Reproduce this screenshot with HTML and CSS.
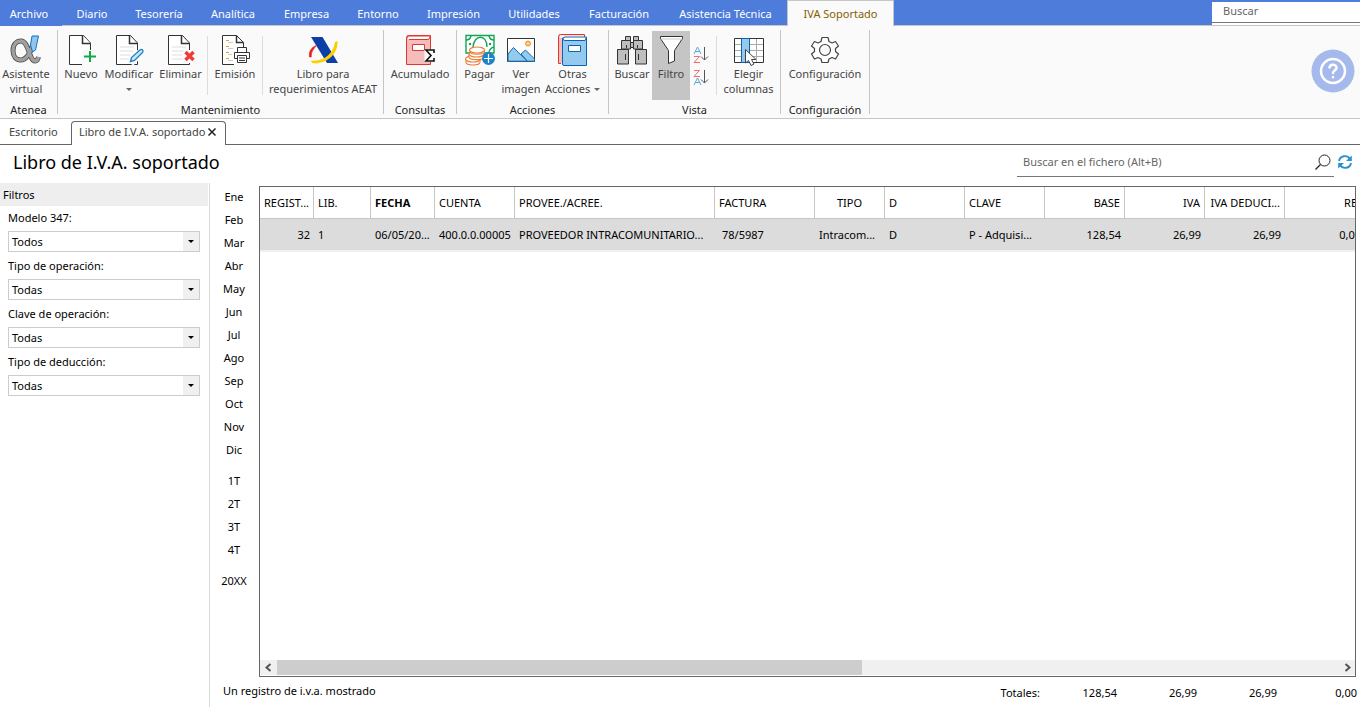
FILE: index.html
```html
<!DOCTYPE html>
<html lang="es">
<head>
<meta charset="utf-8">
<title>Libro de I.V.A. soportado</title>
<link rel="stylesheet" href="styles.css">
</head>
<body>
<div class="app">
  <header class="menubar">
    <nav class="menu">
      <button class="menu-item menu-file">Archivo</button>
      <button class="menu-item">Diario</button>
      <button class="menu-item">Tesorería</button>
      <button class="menu-item">Analítica</button>
      <button class="menu-item">Empresa</button>
      <button class="menu-item">Entorno</button>
      <button class="menu-item">Impresión</button>
      <button class="menu-item">Utilidades</button>
      <button class="menu-item">Facturación</button>
      <button class="menu-item">Asistencia Técnica</button>
      <button class="menu-item menu-active">IVA Soportado</button>
    </nav>
    <div class="top-search"><input type="text" placeholder="Buscar" aria-label="Buscar"></div>
  </header>

  <section class="ribbon">
    <div class="group g-atenea">
      <div class="tools">
        <button class="tool">
          <svg width="32" height="32" viewBox="0 0 32 32"><path d="M24 7C21 18 17 26 10.500 26C6 26 3 22.500 3 16.500C3 10.500 6.500 7 11 7C19 7 19 27 25 27Q27.500 27 28.500 23" fill="none" stroke="#4a4a4a" stroke-width="5"/><path d="M24 7C21 18 17 26 10.500 26C6 26 3 22.500 3 16.500C3 10.500 6.500 7 11 7C19 7 19 27 25 27Q27.500 27 28.500 23" fill="none" stroke="#a0a0a0" stroke-width="3.400"/><path d="M22 2H28.500L25.500 16L22.500 18L20.500 11Z" fill="#8dc8f2" stroke="#1a70b8"/></svg>
          <span>Asistente<br>virtual</span>
        </button>
      </div>
      <h2>Atenea</h2>
    </div>

    <div class="group g-mant">
      <div class="tools">
        <button class="tool">
          <svg width="32" height="32" viewBox="0 0 32 32"><path d="M4.500 1.500H18.500L25.500 9V30.500H4.500Z" fill="#fff" stroke="#333"/><path d="M17.500 1.500V9.500H25.500" fill="#fff" stroke="#333" stroke-width="1.500"/><path d="M17 16H32V32H17Z" fill="#fafafa"/><path d="M25 17V28M19 22.500H31" stroke="#12a84a" stroke-width="2"/></svg>
          <span>Nuevo</span>
        </button>
        <button class="tool">
          <svg width="32" height="32" viewBox="0 0 32 32"><path d="M3.500 1.500H17.500L24.500 9V30.500H3.500Z" fill="#fff" stroke="#333"/><path d="M16.500 1.500V9.500H24.500" fill="none" stroke="#333" stroke-width="1.500"/><path d="M7 13H21M7 17H20M7 21H17M7 25H16" stroke="#ddd"/><path d="M17 27L28 15.500L31 18L20 29Z" fill="#fafafa" stroke="#fafafa" stroke-width="4"/><path d="M17.500 27.500L18.500 23.500L27 16C29 14.500 31 16.500 29.500 18.500L21.500 26.500Z" fill="#cde6f7" stroke="#1b80c4" stroke-width="1.300"/></svg>
          <span>Modificar<br><i class="caret"></i></span>
        </button>
        <button class="tool">
          <svg width="32" height="32" viewBox="0 0 32 32"><path d="M3.500 1.500H17.500L24.500 9V30.500H3.500Z" fill="#fff" stroke="#333"/><path d="M16.500 1.500V9.500H24.500" fill="none" stroke="#333" stroke-width="1.500"/><path d="M7 13H21M7 17H18M7 21H17M7 25H18" stroke="#ddd"/><path d="M18 16H32V29H18Z" fill="#fafafa"/><path d="M20.500 18L28.500 26M28.500 18L20.500 26" stroke="#ef3b37" stroke-width="3.400"/></svg>
          <span>Eliminar</span>
        </button>
        <div class="divider"></div>
        <button class="tool">
          <svg width="32" height="32" viewBox="0 0 32 32"><path d="M15 30.500H3.500V1.500H17.500L24.500 8.500V14" fill="#fff" stroke="#333"/><path d="M17.500 1.500V8.500H24.500" fill="none" stroke="#333" stroke-width="1.500"/><path d="M7 6.500H10M7 12.500H10M7 18.500H10M7 24.500H10" stroke="#f09a1a"/><path d="M9 8.500H14M9 14.500H14M9 20.500H13M9 26.500H14" stroke="#ccc"/><path d="M18.500 18V13.500H27.500V18M18.500 24.500H15.500V18.500H30.500V24.500H27.500" fill="#fff" stroke="#333"/><path d="M18.500 21.500H27.500V28.500H18.500ZM20 24H26M20 26.500H26" fill="#fff" stroke="#333"/></svg>
          <span>Emisión</span>
        </button>
        <div class="divider"></div>
        <button class="tool">
          <svg width="32" height="32" viewBox="0 0 32 32"><path d="M2.500 23C1.500 17 5 13 9.500 11.500C6.500 15 4 17.500 4.200 23Z" fill="#e3221c" stroke="#e3221c" stroke-width=".7"/><path d="M4 3H15.500L31 29H20Z" fill="#0b3ea6"/><path d="M4 26.500C16 28 26.500 20 28 8L30.500 7C31.500 21 18 31 5 29Z" fill="#fbd000"/></svg>
          <span>Libro para<br>requerimientos AEAT</span>
        </button>
      </div>
      <h2>Mantenimiento</h2>
    </div>

    <div class="group g-cons">
      <div class="tools">
        <button class="tool">
          <svg width="32" height="32" viewBox="0 0 32 32"><path d="M2.500 3.500Q2.500 1.500 4.500 1.500H26.500V30.500H2.500Z" fill="#f5bcbc" stroke="#e3342f"/><path d="M3 4.500Q3 2 5 2H26.500L24.500 5.500H5" fill="#fff" stroke="#e3342f"/><path d="M8.500 10.500H20.500V16.500H8.500Z" fill="#fff" stroke="#e3342f"/><path d="M20.500 15.500H31V28H20.500Z" fill="#fafafa"/><path d="M30 19V16H22L27 21.500L22 27H30V24" fill="none" stroke="#111" stroke-width="1.600"/></svg>
          <span>Acumulado</span>
        </button>
      </div>
      <h2>Consultas</h2>
    </div>

    <div class="group g-acc">
      <div class="tools">
        <button class="tool">
          <svg width="32" height="32" viewBox="0 0 32 32"><path d="M2 1.500H30V19H2Z" fill="#fff" stroke="#12a452" stroke-width="1.400"/><path d="M2 6Q6 6 7 2M25 2Q26 6 30 6M30 13Q26 14 25 18M9 13C10 0 23 0 23 13" fill="none" stroke="#12a452" stroke-width="1.400"/><circle cx="6" cy="10" r="1.200" fill="#12a452"/><circle cx="26" cy="10" r="1.200" fill="#12a452"/><g fill="#fff" stroke="#ee7b32" stroke-width="1.100"><path d="M2 25V28C2 32 16 32 16 28V25"/><ellipse cx="9" cy="25" rx="7.500" ry="3"/><path d="M5 20V23C5 26.500 20 26.500 20 23V20"/><ellipse cx="12.500" cy="20" rx="7.500" ry="3"/><path d="M6 16V18C6 21 20.500 21 20.500 18V16"/><ellipse cx="13" cy="16" rx="7.500" ry="3"/></g><circle cx="24.500" cy="24.500" r="6.500" fill="#1b83c8"/><path d="M24.500 20V29M20 24.500H29" stroke="#fff" stroke-width="1.200"/></svg>
          <span>Pagar</span>
        </button>
        <button class="tool">
          <svg width="32" height="32" viewBox="0 0 32 32"><path d="M2.500 4.500H29.500V27.500H2.500Z" fill="#fff" stroke="#333"/><circle cx="23" cy="9.500" r="2.500" fill="#fbcf8a" stroke="#ef8b23"/><path d="M3 20L8.500 13.500L22 27.200H3Z" fill="#93cbef" stroke="#1769aa"/><path d="M16 20L20.500 16L29.500 25V27.200H22.500Z" fill="#93cbef" stroke="#1769aa"/></svg>
          <span>Ver<br>imagen</span>
        </button>
        <button class="tool">
          <svg width="32" height="32" viewBox="0 0 32 32"><path d="M4 29.500H1.500V2.500Q1.500 .5 3.500 .5H27.500V4" fill="#f5bcbc" stroke="#e3342f"/><path d="M3 2.500H27" stroke="#fff" stroke-width="2"/><path d="M5.500 5Q5.500 3.500 7 3.500H29.500V31.500H7Q5.500 31.500 5.500 30Z" fill="#93cbef" stroke="#0e62ae"/><path d="M6 5Q6 3 8 3H29.500L28 6.500H8Q6 6.500 6 5Z" fill="#fff" stroke="#0e62ae"/><path d="M11.500 11.500H23.500V17.500H11.500Z" fill="#fff" stroke="#0e62ae"/></svg>
          <span>Otras<br>Acciones <i class="caret"></i></span>
        </button>
      </div>
      <h2>Acciones</h2>
    </div>

    <div class="group g-vista">
      <div class="tools">
        <button class="tool">
          <svg width="32" height="32" viewBox="0 0 32 32"><g fill="#bebebe" stroke="#333"><path d="M9.500 2.500H14.500V7H9.500ZM17.500 2.500H22.500V7H17.500Z"/><path d="M5.500 15V6.500H14.500V15ZM17.500 15V6.500H26.500V15Z"/><path d="M1.500 30V15.500H12.500V30ZM19.500 30V15.500H30.500V30Z"/><path d="M14.500 8.500H17.500V13.500H14.500Z"/></g><path d="M9.500 20V26M22.500 20V26M10.500 11V14M21.500 11V14" stroke="#333"/></svg>
          <span>Buscar</span>
        </button>
        <button class="tool tool-on" aria-pressed="true">
          <svg width="32" height="32" viewBox="0 0 32 32"><path d="M5.500 2.500H27.500V4.500L19.500 16.500V27L13.500 29.500V16.500L5.500 4.500Z" fill="#fff" stroke="#333"/><path d="M6 5H27" stroke="#ccc"/></svg>
          <span>Filtro</span>
        </button>
        <div class="sorts">
          <button aria-label="Orden ascendente"><svg width="18" height="20" viewBox="0 0 18 20"><path d="M2 8L5.500 1L9 8M3 5.500H8" fill="none" stroke="#57a9dc"/><path d="M2 10.500H7.500L2 16.500H8" fill="none" stroke="#ee6c70"/><path d="M12.500 1V14M9 10.500L12.500 14L16 10.500" fill="none" stroke="#555"/></svg></button>
          <button aria-label="Orden descendente"><svg width="18" height="20" viewBox="0 0 18 20"><path d="M2 1.500H7.500L2 7.500H8" fill="none" stroke="#ee6c70"/><path d="M2 16L5.500 9L9 16M3 13.500H8" fill="none" stroke="#57a9dc"/><path d="M12.500 1V14M9 10.500L12.500 14L16 10.500" fill="none" stroke="#555"/></svg></button>
        </div>
        <div class="divider"></div>
        <button class="tool">
          <svg width="32" height="32" viewBox="0 0 32 32"><path d="M1.500 4.500H30.500V28.500H1.500Z" fill="#fff" stroke="#333"/><path d="M2 10.500H30M2 16.500H30M2 22.500H30M23.500 5V28" stroke="#aaa"/><path d="M8.500 4.500H16.500V28.500H8.500Z" fill="#93cbef" stroke="#0e62ae"/><path d="M12.500 15.500V29L15.500 26.500L18 31.500L21 30L18.500 25.500H23Z" fill="#fff" stroke="#444"/></svg>
          <span>Elegir<br>columnas</span>
        </button>
      </div>
      <h2>Vista</h2>
    </div>

    <div class="group g-conf">
      <div class="tools">
        <button class="tool">
          <svg width="32" height="32" viewBox="0 0 32 32"><path d="M13 3.500H19L20 7.500L23 9L26.500 7.500L29.500 12L26.500 14.500V17.500L29.500 20L26.500 25L23 23.500L20 25L19 28.500H13L12 25L9 23.500L5.500 25L2.500 20L5.500 17.500V14.500L2.500 12L5.500 7.500L9 9L12 7.500Z" fill="#fff" stroke="#444" stroke-width="1.200" stroke-linejoin="round"/><circle cx="16" cy="16" r="5.500" fill="#fafafa" stroke="#444" stroke-width="1.200"/></svg>
          <span>Configuración</span>
        </button>
      </div>
      <h2>Configuración</h2>
    </div>

    <button class="help" aria-label="Ayuda">
      <svg width="44" height="44" viewBox="0 0 44 44"><circle cx="22" cy="22" r="21.500" fill="#a5b9ec"/><g fill="none" stroke="#fff" stroke-width="2.500" stroke-linecap="round"><circle cx="22" cy="22" r="12"/><path d="M18.500 18.500C19 14.500 26 15 25.500 19C25.200 21.500 22 21.500 22 24M22 28V28.200"/></g></svg>
    </button>
  </section>

  <nav class="doctabs">
    <button class="doctab">Escritorio</button>
    <div class="doctab doctab-on">
      <span>Libro de I.V.A. soportado</span>
      <button class="close" aria-label="Cerrar"><svg width="10" height="10" viewBox="0 0 10 10"><path d="M1.500 1.500L8.500 8.500M8.500 1.500L1.500 8.500" stroke="#222" stroke-width="1.500"/></svg></button>
    </div>
    <div class="doctabs-rest"></div>
  </nav>

  <div class="titlebar">
    <h1>Libro de I.V.A. soportado</h1>
    <div class="file-search">
      <input type="text" placeholder="Buscar en el fichero (Alt+B)" aria-label="Buscar en el fichero">
      <button aria-label="Buscar"><svg width="16" height="16" viewBox="0 0 16 16"><circle cx="9.500" cy="6.500" r="5.500" fill="none" stroke="#222"/><path d="M5.500 10.500L.5 15.500" stroke="#222" stroke-width="1.200"/></svg></button>
    </div>
    <button class="refresh" aria-label="Actualizar"><svg width="16" height="16" viewBox="0 0 16 16"><path d="M2 7C3 1.500 10 .5 13 5M14 9C13 14.500 6 15.500 3 11" fill="none" stroke="#2a8fd0" stroke-width="1.900"/><path d="M14.800 1.500V7H9ZM1.200 14.500V9H7Z" fill="#2a8fd0"/></svg></button>
  </div>

  <main class="work">
    <aside class="filters">
      <h2>Filtros</h2>
      <div class="fields">
        <label for="f1">Modelo 347:</label>
        <div class="combo"><select id="f1"><option>Todos</option></select></div>
        <label for="f2">Tipo de operación:</label>
        <div class="combo"><select id="f2"><option>Todas</option></select></div>
        <label for="f3">Clave de operación:</label>
        <div class="combo"><select id="f3"><option>Todas</option></select></div>
        <label for="f4">Tipo de deducción:</label>
        <div class="combo"><select id="f4"><option>Todas</option></select></div>
      </div>
    </aside>

    <section class="content">
      <nav class="periods">
        <button>Ene</button><button>Feb</button><button>Mar</button><button>Abr</button><button>May</button><button>Jun</button><button>Jul</button><button>Ago</button><button>Sep</button><button>Oct</button><button>Nov</button><button>Dic</button>
        <button class="first">1T</button><button>2T</button><button>3T</button><button>4T</button>
        <button class="first">20XX</button>
      </nav>
      <div class="grid-frame">
        <div class="grid-view">
          <table>
            <colgroup><col class="c54"><col class="c57"><col class="c64"><col class="c80"><col class="c200"><col class="c100"><col class="c70"><col class="c80"><col class="c80"><col class="c80"><col class="c80"><col class="c80"><col class="c80"></colgroup>
            <thead><tr><th>REGIST...</th><th>LIB.</th><th class="sorted">FECHA</th><th>CUENTA</th><th>PROVEE./ACREE.</th><th>FACTURA</th><th class="mid">TIPO</th><th>D</th><th>CLAVE</th><th class="num">BASE</th><th class="num">IVA</th><th class="num">IVA DEDUCI...</th><th class="num">RE.</th></tr></thead>
            <tbody><tr><td class="num">32</td><td>1</td><td>06/05/20...</td><td>400.0.0.00005</td><td>PROVEEDOR INTRACOMUNITARIO...</td><td class="inset">78/5987</td><td>Intracom...</td><td>D</td><td>P - Adquisi...</td><td class="num">128,54</td><td class="num">26,99</td><td class="num">26,99</td><td class="num">0,00</td></tr></tbody>
          </table>
        </div>
        <div class="hscroll">
          <button aria-label="Desplazar a la izquierda"><svg width="16" height="15" viewBox="0 0 16 15"><path d="M10.500 4L6.500 7.500L10.500 11" fill="none" stroke="#555" stroke-width="2"/></svg></button>
          <div class="track"><div class="thumb"></div></div>
          <button aria-label="Desplazar a la derecha"><svg width="16" height="15" viewBox="0 0 16 15"><path d="M5.500 4L9.500 7.500L5.500 11" fill="none" stroke="#555" stroke-width="2"/></svg></button>
        </div>
      </div>
      <footer class="status">
        <span class="count">Un registro de i.v.a. mostrado</span>
        <span class="total">Totales:</span><span class="total">128,54</span><span class="total">26,99</span><span class="total">26,99</span><span class="total">0,00</span>
      </footer>
    </section>
  </main>
</div>
</body>
</html>
```

FILE: styles.css
```css
* { box-sizing: border-box; }
body {
  margin: 0;
  font-family: "Noto Sans", "Open Sans", sans-serif;
  font-size: 11px;
  line-height: 15px;
  color: #000;
  background: #fff;
}
button, input, select { font: inherit; color: inherit; margin: 0; border: 0; padding: 0; background: none; border-radius: 0; }
h1, h2 { margin: 0; font-size: 11px; font-weight: 400; }
svg { display: block; }
.app { display: flex; flex-direction: column; height: 100vh; overflow: hidden; }

.menubar { display: flex; justify-content: space-between; height: 26px; background: #4d7cdb; border-bottom: 1px solid #c6c6c6; flex: none; }
.menu { display: grid; grid-template-columns: 62px 60px 74px 74px 73px 70px 81px 80px 90px 123px 107px; }
.menu-item { height: 26px; color: #fff; white-space: nowrap; }
.menu-file { padding-right: 4px; background: #4d7cdb; }
.menu-active { background: #fafafa; color: #866000; border: 1px solid #c6c6c6; border-bottom: 0; }
.top-search { width: 148px; height: 23px; margin-top: 2px; background: #fff; }
.top-search input { display: block; width: 100%; height: 21px; padding: 0 11px 4px; border-bottom: 1px solid #777; }
input::placeholder { color: #666; opacity: 1; }

.ribbon { display: flex; height: 93px; flex: none; padding: 4px 0; background: #fafafa; border-bottom: 1px solid #c6c6c6; }
.group { display: flex; flex-direction: column; justify-content: space-between; border-right: 1px solid #c6c6c6; }
.group h2 { text-align: center; line-height: 9px; color: #222; }
.tools { display: grid; padding-top: 1px; height: 70px; }
.g-atenea .tools { grid-template-columns: 52px 5px; }
.g-mant .tools { grid-template-columns: 46px 50px 53px 1px 54px 1px 120px; }
.g-cons .tools { grid-template-columns: 72px; }
.g-acc .tools { grid-template-columns: 45px 38px 68px; }
.g-acc .tool:last-child { padding-right: 3px; }
.g-vista .tools { grid-template-columns: 3px 40px 38px 26px 1px 63px; }
.g-vista .tools .tool:first-child { grid-column: 2; }
.g-conf .tools { grid-template-columns: 88px; }
.tool { display: flex; flex-direction: column; align-items: center; justify-content: flex-start; padding-top: 3px; color: #444; white-space: nowrap; }
.tool span { display: block; text-align: center; }
.tool-on { background: #c5c5c5; }
.caret { display: inline-block; border: 3px solid transparent; border-top-color: #666; border-bottom: 0; vertical-align: 2px; margin-left: 1px; }
.divider { background: #ddd; margin: 5px 0; }
.sorts { display: flex; flex-direction: column; gap: 3px; padding: 15px 0 0 2px; align-items: flex-start; }
.help { margin: 19px 5px 0 auto; height: 44px; }

.doctabs { display: flex; height: 26px; flex: none; align-items: flex-end; }
.doctab { height: 26px; width: 71px; padding: 0 13px 0 9px; border-bottom: 1px solid #666; color: #444; text-align: left; white-space: nowrap; }
.doctab-on { display: flex; align-items: center; justify-content: space-between; height: 24px; width: 155px; padding: 0 8px 4px 7px; border: 1px solid #666; border-bottom: 0; border-radius: 4px 4px 0 0; }
.doctabs-rest { flex: 1; height: 26px; border-bottom: 1px solid #666; }

.titlebar { display: flex; align-items: center; height: 38px; flex: none; padding: 0 7px 4px 13px; }
.titlebar h1 { flex: 1; font-size: 18px; line-height: 24px; }
.file-search { display: flex; align-items: center; width: 317px; height: 30px; padding: 0 3px 0 6px; border-bottom: 1px solid #777; }
.file-search input { flex: 1; }
.refresh { margin-left: 3px; }

.work { display: flex; flex: 1; min-height: 0; }
.filters { width: 210px; flex: none; border-right: 1px solid #d9d9d9; }
.filters h2 { height: 23px; padding: 4px 3px; background: #eee; margin-right: 1px; }
.fields { padding: 4px 9px 0 8px; }
.fields label { display: block; height: 21px; }
.combo { position: relative; margin-bottom: 6px; }
.combo select { display: block; appearance: none; width: 100%; height: 21px; padding: 0 20px 0 3px; border: 1px solid #ccc; background: linear-gradient(#f0f0f0, #f0f0f0) right / 16px 100% no-repeat #fff; }
.combo::after { content: ""; position: absolute; right: 6px; top: 9px; border: 3px solid transparent; border-top-color: #000; border-bottom: 0; pointer-events: none; }

.content { flex: 1; min-width: 0; display: grid; grid-template-columns: 49px 1fr; grid-template-rows: 1fr 30px; padding-top: 3px; }
.periods { display: flex; flex-direction: column; }
.periods button { height: 23px; padding: 0 1px 2px 0; text-align: center; }
.periods .first { margin-top: 8px; }
.grid-frame { display: flex; flex-direction: column; min-width: 0; margin-right: 4px; border: 1px solid #666; }
.grid-view { flex: 1; overflow: hidden; }
table { width: 1105px; table-layout: fixed; border-collapse: separate; border-spacing: 0; }
.c54 { width: 54px; } .c57 { width: 57px; } .c64 { width: 64px; } .c70 { width: 70px; }
.c80 { width: 80px; } .c100 { width: 100px; } .c200 { width: 200px; }
th, td { padding: 0 0 0 4px; text-align: left; font-weight: 400; white-space: nowrap; }
th { height: 32px; border-right: 1px solid #c6c6c6; border-bottom: 1px solid #c6c6c6; }
td { height: 33px; background: #dcdcdc; border-bottom: 2px solid #f0f0f0; }
td.num, th.num { text-align: right; padding-right: 4px; }
th.mid { text-align: center; padding: 0; }
th.sorted { font-weight: 700; }
td.inset { padding-left: 7px; }
.hscroll { display: grid; grid-template-columns: 17px 1fr 15px; height: 16px; background: #f0f0f0; border-bottom: 1px solid #fff; }
.thumb { width: 55%; height: 15px; background: #cdcdcd; }
.status { grid-column: 1 / -1; display: grid; grid-template-columns: 1fr 83px 77px 80px 80px 80px; padding: 6px 3px 0 13px; }
.total { text-align: right; padding-top: 2px; }
```
